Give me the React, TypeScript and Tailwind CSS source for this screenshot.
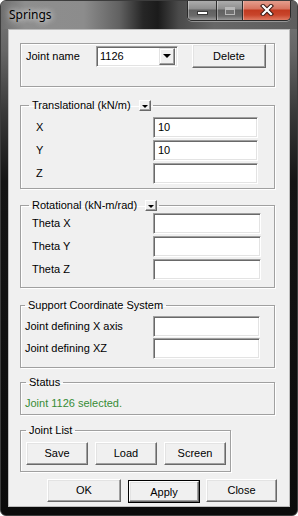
import React from "react";

function Field({ className, value }: { className: string; value?: string }) {
  return (
    <div
      className={
        "h-[21px] bg-white border border-t-[#a0a0a0] border-l-[#a0a0a0] border-r-white border-b-white shadow-[inset_1px_1px_0_#696969,inset_-1px_-1px_0_#e3e3e3] pl-[4px] flex items-center text-[11px] leading-[13px] " +
        className
      }
    >
      {value}
    </div>
  );
}

function Btn({ className, children }: { className: string; children: React.ReactNode }) {
  return (
    <div
      className={
        "bg-[#f0f0f0] border border-t-white border-l-white border-r-[#696969] border-b-[#696969] shadow-[inset_-1px_-1px_0_#a0a0a0,inset_1px_1px_0_#e3e3e3] flex items-center justify-center text-[11px] leading-[13px] " +
        className
      }
    >
      {children}
    </div>
  );
}

function SmallDrop() {
  return (
    <div className="ml-[8px] w-[12px] h-[11px] bg-[#f0f0f0] border border-t-white border-l-white border-r-[#696969] border-b-[#696969] shadow-[inset_-1px_-1px_0_#a0a0a0] flex items-center justify-center">
      <div className="mt-[2px] w-0 h-0 border-l-[3px] border-r-[3px] border-t-[3px] border-l-transparent border-r-transparent border-t-black" />
    </div>
  );
}

function Legend({ className, children }: { className: string; children: React.ReactNode }) {
  return (
    <legend className={"px-[3px] " + className}>
      <span className="flex items-center h-[13px] leading-[13px]">{children}</span>
    </legend>
  );
}

const groupCls =
  "border border-[#a0a0a0] shadow-[inset_1px_1px_0_#ffffff,1px_1px_0_#ffffff] ";

function Row({
  label,
  labelCls,
  fieldCls,
  value,
}: {
  label: string;
  labelCls: string;
  fieldCls: string;
  value?: string;
}) {
  return (
    <div className="flex items-center h-[21px]">
      <div className={"leading-[13px] " + labelCls}>{label}</div>
      <Field className={fieldCls} value={value} />
    </div>
  );
}

export default function App() {
  return (
    <div className="w-[298px] h-[516px] bg-white font-['Liberation_Sans',Arial,sans-serif] text-[11px] text-black">
      <div className="w-[298px] h-[516px] rounded-[6px] border border-[#3c3c3c] overflow-hidden flex flex-col bg-[linear-gradient(to_bottom,#7a7a7a_0px,#666666_50px,#3a3a3a_110px,#141414_180px,#0b0b0b_100%)]">
        {/* Title bar */}
        <div className="h-[28px] flex items-start bg-[linear-gradient(to_right,#6e6e6e_0%,#8e8e8e_8%,#8c8c8c_28%,#616161_40%,#262626_48%,#1b1b1b_53%,#4a4a4a_60%,#676767_72%,#5e5e5e_100%)]">
          <div className="pl-[8px] pt-[5px] font-['Noto_Sans',sans-serif] text-[12px] leading-[18px] text-black [text-shadow:0_0_6px_rgba(255,255,255,0.9),0_0_10px_rgba(255,255,255,0.6)]">
            Springs
          </div>
          <div className="ml-auto mr-[6px] -mt-[1px] h-[21px] flex rounded-b-[5px] border border-t-0 border-[#2a2a2a] overflow-hidden shadow-[0_1px_0_rgba(255,255,255,0.35)]">
            <div className="w-[29px] h-full flex items-end justify-center pb-[5px] border-r border-[#2e2e2e] bg-[linear-gradient(to_bottom,#b0b0b0_0%,#8e8e8e_45%,#606060_50%,#6a6a6a_80%,#9a9a9a_100%)] shadow-[inset_1px_0_0_rgba(255,255,255,0.35)]">
              <div className="w-[11px] h-[4px] bg-white border border-[#3a3a3a]" />
            </div>
            <div className="w-[26px] h-full flex items-center justify-center border-r border-[#2e2e2e] bg-[linear-gradient(to_bottom,#b0b0b0_0%,#8e8e8e_45%,#606060_50%,#6a6a6a_80%,#9a9a9a_100%)] shadow-[inset_1px_0_0_rgba(255,255,255,0.35)]">
              <div className="mt-[1px] w-[10px] h-[8px] border border-[#b8b8b8] bg-[#707070] shadow-[inset_0_2px_0_#b8b8b8]" />
            </div>
            <div className="w-[47px] h-full flex items-center justify-center bg-[linear-gradient(to_bottom,#e6a393_0%,#d6735f_45%,#c23a20_50%,#c8452b_75%,#e07a62_100%)] shadow-[inset_1px_0_0_rgba(255,255,255,0.35)]">
              <svg width="14" height="12" viewBox="0 0 14 12">
                <path d="M3 2 L11 10 M11 2 L3 10" stroke="#3a1a14" strokeWidth="4.2" strokeLinecap="square" />
                <path d="M3 2 L11 10 M11 2 L3 10" stroke="#ffffff" strokeWidth="2.2" strokeLinecap="square" />
              </svg>
            </div>
          </div>
        </div>

        {/* Client area */}
        <div className="ml-[7px] w-[282px] h-[478px] border border-[#bdbdbd] bg-[#f0f0f0] pl-[11px] flex flex-col">
          {/* Joint name */}
          <fieldset className={groupCls + "mt-[13px] w-[255px] h-[44px]"}>
            <div className="h-full flex items-center pl-[5px]">
              <div className="w-[70px] leading-[13px]">Joint name</div>
              <div className="w-[82px] h-[21px] bg-white border border-t-[#a0a0a0] border-l-[#a0a0a0] border-r-white border-b-white shadow-[inset_1px_1px_0_#696969,inset_-1px_-1px_0_#e3e3e3] flex items-center pl-[3px] pr-[2px]">
                <span className="flex-1 leading-[13px]">1126</span>
                <div className="w-[16px] h-[17px] bg-[#f0f0f0] border border-t-[#e3e3e3] border-l-[#e3e3e3] border-r-[#696969] border-b-[#696969] shadow-[inset_-1px_-1px_0_#a0a0a0,inset_1px_1px_0_#ffffff] flex items-center justify-center">
                  <div className="w-0 h-0 border-l-[4px] border-r-[4px] border-t-[4px] border-l-transparent border-r-transparent border-t-black" />
                </div>
              </div>
              <Btn className="ml-[14px] w-[74px] h-[24px]">Delete</Btn>
            </div>
          </fieldset>

          {/* Translational */}
          <fieldset className={groupCls + "mt-[12px] w-[255px]"}>
            <Legend className="ml-[8px] pr-[2px]">
              Translational (kN/m)
              <SmallDrop />
            </Legend>
            <div className="pt-[5px] pb-[4px] pl-[15px] flex flex-col gap-[2px]">
              <Row label="X" labelCls="w-[117px]" fieldCls="w-[105px]" value="10" />
              <Row label="Y" labelCls="w-[117px]" fieldCls="w-[105px]" value="10" />
              <Row label="Z" labelCls="w-[117px]" fieldCls="w-[105px]" />
            </div>
          </fieldset>

          {/* Rotational */}
          <fieldset className={groupCls + "mt-[10px] w-[255px]"}>
            <Legend className="ml-[8px] pr-[2px]">
              Rotational (kN-m/rad)
              <SmallDrop />
            </Legend>
            <div className="pt-[1px] pb-[7px] pl-[11px] flex flex-col gap-[2px]">
              <Row label="Theta X" labelCls="w-[121px]" fieldCls="w-[108px]" />
              <Row label="Theta Y" labelCls="w-[121px]" fieldCls="w-[108px]" />
              <Row label="Theta Z" labelCls="w-[121px]" fieldCls="w-[108px]" />
            </div>
          </fieldset>

          {/* Support Coordinate System */}
          <fieldset className={groupCls + "mt-[11px] w-[255px]"}>
            <Legend className="ml-[4px]">Support Coordinate System</Legend>
            <div className="pt-[4px] pb-[8px] pl-[4px] flex flex-col gap-[1px]">
              <Row label="Joint defining X axis" labelCls="w-[128px]" fieldCls="w-[107px]" />
              <Row label="Joint defining XZ" labelCls="w-[128px]" fieldCls="w-[107px]" />
            </div>
          </fieldset>

          {/* Status */}
          <fieldset className={groupCls + "mt-[8px] w-[255px]"}>
            <Legend className="ml-[5px]">Status</Legend>
            <div className="pt-[8px] pb-[4px] pl-[4px] leading-[13px] text-[#368c36]">
              Joint 1126 selected.
            </div>
          </fieldset>

          {/* Joint List */}
          <fieldset className={groupCls + "mt-[9px] w-[211px]"}>
            <Legend className="ml-[5px]">Joint List</Legend>
            <div className="pt-[5px] pb-[6px] pl-[5px] flex gap-[7px]">
              <Btn className="w-[62px] h-[23px]">Save</Btn>
              <Btn className="w-[62px] h-[23px]">Load</Btn>
              <Btn className="w-[62px] h-[23px]">Screen</Btn>
            </div>
          </fieldset>

          {/* Bottom buttons */}
          <div className="mt-[7px] pl-[27px] flex items-start">
            <Btn className="w-[74px] h-[23px]">OK</Btn>
            <div className="ml-[7px] mt-[1px] border border-black">
              <Btn className="w-[70px] h-[21px] pt-[2px]">Apply</Btn>
            </div>
            <Btn className="ml-[6px] w-[71px] h-[23px]">Close</Btn>
          </div>
        </div>
      </div>
    </div>
  );
}
